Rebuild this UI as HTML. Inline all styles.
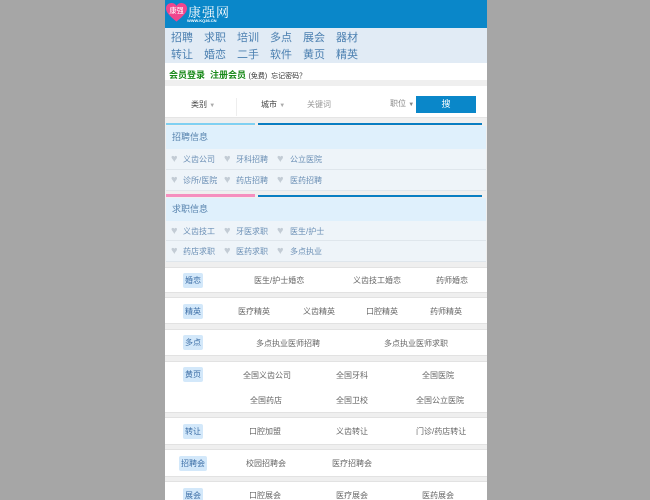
<!DOCTYPE html>
<html><head><meta charset="utf-8"><style>
*{margin:0;padding:0;box-sizing:border-box}
body{width:650px;height:500px;background:#a6a6a6;font-family:"Liberation Sans","Noto Sans CJK SC",sans-serif;overflow:hidden;position:relative}
#p{position:absolute;left:165px;top:0;width:322px;height:500px;background:#efefef;overflow:hidden}
.a{position:absolute;white-space:nowrap}
.nav{color:#4a7fb0;font-size:11px}
.it{color:#6b8fb5;font-size:8px}
.ht{color:#c3ccd5;font-size:11px;line-height:11px}
.g{color:#666;font-size:8px}
.tag{position:absolute;background:#d3e8fa;color:#3c6ea6;font-size:8px;height:15px;line-height:15px;text-align:center;border-radius:2px}
.w{position:absolute;left:0;width:322px;background:#fff;border-top:1px solid #e2e2e2;border-bottom:1px solid #e2e2e2}
.row{position:absolute;left:1px;width:320px;background:#eef4f9;border-bottom:1px solid #dfe6ec}
.hd{position:absolute;left:1px;width:320px;background:#dff0fc;color:#5682ad;font-size:9px;padding-left:6px}
</style></head><body><div id="p">
<div class="a" style="left:0;top:0;width:322px;height:28px;background:#0a87c9"></div>
<svg class="a" style="left:1px;top:2px" width="21" height="21" viewBox="0 0 22 20"><path d="M11 19.5 C3 13 0 9.5 0 5.5 C0 2 3 0 6 0 C8.5 0 10 1.5 11 3 C12 1.5 13.5 0 16 0 C19 0 22 2 22 5.5 C22 9.5 19 13 11 19.5Z" fill="#f0468e"/><text x="11" y="10.5" font-size="7.5" fill="#fff" text-anchor="middle" font-family="Noto Sans CJK SC">康强</text></svg>
<div class="a" style="left:23px;top:2px;color:#fff;font-size:13px;font-family:'Noto Serif CJK SC',serif;letter-spacing:1px">康强网</div>
<div class="a" style="left:22px;top:18px;color:#fff;font-size:4px;font-weight:bold">WWW.KQ36.CN</div>
<div class="a" style="left:0;top:28px;width:322px;height:35px;background:#e1ebf5"></div>
<div class="a nav" style="left:6px;top:29px"><span style="margin-right:11px">招聘</span><span style="margin-right:11px">求职</span><span style="margin-right:11px">培训</span><span style="margin-right:11px">多点</span><span style="margin-right:11px">展会</span><span>器材</span></div>
<div class="a nav" style="left:6px;top:46px"><span style="margin-right:11px">转让</span><span style="margin-right:11px">婚恋</span><span style="margin-right:11px">二手</span><span style="margin-right:11px">软件</span><span style="margin-right:11px">黄页</span><span>精英</span></div>
<div class="a" style="left:0;top:63px;width:322px;height:17px;background:#fff"></div>
<div class="a" style="left:4px;top:68px;font-size:9px;font-weight:bold;color:#1a8a1a">会员登录 &nbsp;注册会员 <span style="font-weight:normal;color:#333;font-size:7px">(免费) &nbsp;忘记密码？</span></div>
<div class="a" style="left:0;top:86px;width:322px;height:32px;background:#fff;border-bottom:1px solid #e5e5e5"></div>
<div class="a" style="left:71px;top:98px;width:1px;height:18px;background:#eee"></div>
<div class="a g" style="left:26px;top:99px;color:#444">类别 <span style="color:#aaa;font-size:6px">▼</span></div>
<div class="a g" style="left:96px;top:99px;color:#444">城市 <span style="color:#aaa;font-size:6px">▼</span></div>
<div class="a g" style="left:142px;top:99px;color:#999">关键词</div>
<div class="a g" style="left:225px;top:98px;color:#888">职位 <span style="font-size:6px">▼</span></div>
<div class="a" style="left:251px;top:96px;width:60px;height:17px;background:#0a87c9;color:#fff;font-size:9px;text-align:center;line-height:17px">搜</div>
<div class="a" style="left:1px;top:123px;width:89px;height:2px;background:#7fd0f2"></div>
<div class="a" style="left:93px;top:123px;width:224px;height:2px;background:#0a7ec2"></div>
<div class="hd" style="top:126px;height:23px;line-height:22px">招聘信息</div>
<div class="row" style="top:149px;height:21px"></div>
<div class="row" style="top:170px;height:21px"></div>
<div class="a ht" style="left:6px;top:154px">♥</div><div class="a it" style="left:18px;top:154px">义齿公司</div>
<div class="a ht" style="left:59px;top:154px">♥</div><div class="a it" style="left:71px;top:154px">牙科招聘</div>
<div class="a ht" style="left:112px;top:154px">♥</div><div class="a it" style="left:125px;top:154px">公立医院</div>
<div class="a ht" style="left:6px;top:175px">♥</div><div class="a it" style="left:18px;top:175px">诊所/医院</div>
<div class="a ht" style="left:59px;top:175px">♥</div><div class="a it" style="left:71px;top:175px">药店招聘</div>
<div class="a ht" style="left:112px;top:175px">♥</div><div class="a it" style="left:125px;top:175px">医药招聘</div>
<div class="a" style="left:1px;top:194px;width:89px;height:3px;background:#f58fbf"></div>
<div class="a" style="left:93px;top:195px;width:224px;height:2px;background:#0a7ec2"></div>
<div class="hd" style="top:198px;height:23px;line-height:22px">求职信息</div>
<div class="row" style="top:221px;height:20px"></div>
<div class="row" style="top:241px;height:21px"></div>
<div class="a ht" style="left:6px;top:226px">♥</div><div class="a it" style="left:18px;top:226px">义齿技工</div>
<div class="a ht" style="left:59px;top:226px">♥</div><div class="a it" style="left:71px;top:226px">牙医求职</div>
<div class="a ht" style="left:112px;top:226px">♥</div><div class="a it" style="left:125px;top:226px">医生/护士</div>
<div class="a ht" style="left:6px;top:246px">♥</div><div class="a it" style="left:18px;top:246px">药店求职</div>
<div class="a ht" style="left:59px;top:246px">♥</div><div class="a it" style="left:71px;top:246px">医药求职</div>
<div class="a ht" style="left:112px;top:246px">♥</div><div class="a it" style="left:125px;top:246px">多点执业</div>

<div class="w" style="top:267px;height:26px"></div>
<div class="tag" style="left:18px;top:273px;width:20px">婚恋</div>
<div class="a g" style="left:89px;top:275px">医生/护士婚恋</div><div class="a g" style="left:188px;top:275px">义齿技工婚恋</div><div class="a g" style="left:271px;top:275px">药师婚恋</div>
<div class="w" style="top:297px;height:27px"></div>
<div class="tag" style="left:18px;top:304px;width:20px">精英</div>
<div class="a g" style="left:73px;top:306px">医疗精英</div><div class="a g" style="left:138px;top:306px">义齿精英</div><div class="a g" style="left:201px;top:306px">口腔精英</div><div class="a g" style="left:265px;top:306px">药师精英</div>
<div class="w" style="top:329px;height:27px"></div>
<div class="tag" style="left:18px;top:335px;width:20px">多点</div>
<div class="a g" style="left:91px;top:338px">多点执业医师招聘</div><div class="a g" style="left:219px;top:338px">多点执业医师求职</div>
<div class="w" style="top:361px;height:52px"></div>
<div class="tag" style="left:18px;top:367px;width:20px">黄页</div>
<div class="a g" style="left:78px;top:370px">全国义齿公司</div><div class="a g" style="left:171px;top:370px">全国牙科</div><div class="a g" style="left:257px;top:370px">全国医院</div>
<div class="a g" style="left:85px;top:395px">全国药店</div><div class="a g" style="left:171px;top:395px">全国卫校</div><div class="a g" style="left:251px;top:395px">全国公立医院</div>
<div class="w" style="top:417px;height:28px"></div>
<div class="tag" style="left:18px;top:424px;width:20px">转让</div>
<div class="a g" style="left:84px;top:426px">口腔加盟</div><div class="a g" style="left:171px;top:426px">义齿转让</div><div class="a g" style="left:251px;top:426px">门诊/药店转让</div>
<div class="w" style="top:449px;height:28px"></div>
<div class="tag" style="left:14px;top:456px;width:28px">招聘会</div>
<div class="a g" style="left:81px;top:458px">校园招聘会</div><div class="a g" style="left:167px;top:458px">医疗招聘会</div>
<div class="w" style="top:481px;height:30px"></div>
<div class="tag" style="left:18px;top:488px;width:20px">展会</div>
<div class="a g" style="left:84px;top:490px">口腔展会</div><div class="a g" style="left:171px;top:490px">医疗展会</div><div class="a g" style="left:257px;top:490px">医药展会</div>
</div></body></html>
